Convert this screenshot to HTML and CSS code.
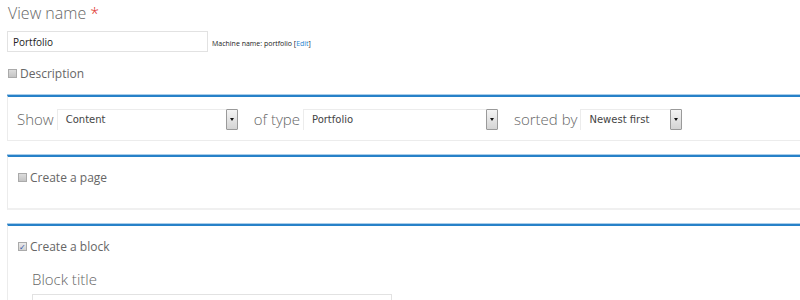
FILE: index.html
```html
<!DOCTYPE html>
<html lang="en">
<head>
  <meta charset="UTF-8">
  <title>Add view</title>
  <link rel="stylesheet" href="styles.css">
</head>
<body>
  <div class="page">
    <label class="view-label">View name <span class="required">*</span></label>
    <div class="name-row">
      <input type="text" class="name-input" value="Portfolio">
      <span class="machine">Machine name: portfolio [<a href="#">Edit</a>]</span>
    </div>
    <label class="check-row desc">
      <span class="box"></span> Description
    </label>

    <!-- Show / type / sort -->
    <div class="fieldset show-set">
      <span class="word">Show</span>
      <div class="select w-content"><span>Content</span><span class="arrow"></span></div>
      <span class="word">of type</span>
      <div class="select w-type"><span>Portfolio</span><span class="arrow"></span></div>
      <span class="word">sorted by</span>
      <div class="select w-sort"><span>Newest first</span><span class="arrow"></span></div>
    </div>

    <div class="fieldset page-set">
      <label class="check-row">
        <span class="box"></span> Create a page
      </label>
    </div>

    <div class="fieldset block-set">
      <label class="check-row">
        <span class="box checked">&#10003;</span> Create a block
      </label>
      <div class="block-title">Block title</div>
      <input type="text" class="title-input">
    </div>
  </div>
</body>
</html>
```

FILE: styles.css
```css
html, body {
  height: 300px;
  overflow: hidden;
}
body {
  margin: 0;
  padding: 0;
  font-family: "Open Sans", sans-serif;
  color: #666;
  background: #fff;
}
.page {
  padding: 2px 0 0 7px;
  width: 820px;
}
.view-label {
  display: block;
  font-size: 16px;
  font-weight: 300;
  line-height: 22px;
  margin-left: 1px;
  color: #666;
}
.required {
  color: #e0332d;
}
.name-row {
  display: flex;
  align-items: flex-end;
  margin-top: 7px;
}
.name-input {
  box-sizing: border-box;
  width: 201px;
  height: 21px;
  border: 1px solid #e2e2e2;
  padding: 0 5px;
  font-family: "Open Sans", sans-serif;
  font-size: 10px;
  color: #222;
  outline: none;
}
.machine {
  font-size: 7px;
  color: #222;
  margin-left: 4px;
  margin-bottom: 4px;
}
.machine a {
  color: #2b87cf;
  text-decoration: none;
}
.check-row {
  display: flex;
  align-items: center;
  gap: 3px;
  font-size: 12px;
  color: #666;
}
.desc {
  margin-top: 11px;
  margin-left: 1px;
  height: 20px;
}
.box {
  box-sizing: border-box;
  width: 9px;
  height: 9px;
  border: 1px solid #aaa;
  background: linear-gradient(#dcdcdc, #c4c4c4);
  display: inline-flex;
  align-items: center;
  justify-content: center;
  font-size: 8px;
  line-height: 1;
  color: #3355aa;
}
.box.checked {
  background: linear-gradient(#eaeaea, #d2d2d2);
}
.fieldset {
  box-sizing: border-box;
  border: 1px solid #ececec;
  border-top: 2px solid #2781c8;
  box-shadow: 0 -1px 0 #a9cdea;
  border-right: none;
}
.show-set {
  margin-top: 12px;
  height: 46px;
  display: flex;
  align-items: center;
  padding: 1px 0 0 9px;
}
.word {
  font-size: 15px;
  font-weight: 300;
  color: #666;
  margin-right: 3px;
}
.select {
  box-sizing: border-box;
  height: 21px;
  display: flex;
  align-items: center;
  justify-content: space-between;
  border-left: 1px solid #ececec;
  border-top: 1px solid #ececec;
  font-family: "DejaVu Sans", Verdana, sans-serif;
  font-size: 10px;
  color: #444;
  padding-left: 8px;
  margin-right: 16px;
}
.arrow {
  box-sizing: border-box;
  width: 12px;
  height: 21px;
  border: 1px solid #9a9a9a;
  border-radius: 1px;
  background: linear-gradient(#f4f4f4, #d4d4d4);
  position: relative;
}
.arrow::after {
  content: "";
  position: absolute;
  left: 3px;
  top: 8px;
  border-left: 2px solid transparent;
  border-right: 2px solid transparent;
  border-top: 3px solid #111;
}
.w-content { width: 181px; }
.w-type { width: 195px; }
.w-sort { width: 102px; }
.page-set {
  margin-top: 14px;
  height: 55px;
  padding: 12px 0 0 10px;
  border-bottom: 2px solid #f0f0f0;
}
.block-set {
  margin-top: 14px;
  height: 90px;
  padding: 12px 0 0 10px;
}
.block-title {
  font-size: 15px;
  font-weight: 300;
  color: #666;
  margin: 14px 0 0 14px;
}
.title-input {
  display: block;
  box-sizing: border-box;
  width: 360px;
  height: 22px;
  margin: 5px 0 0 14px;
  border: 1px solid #e2e2e2;
}
```
